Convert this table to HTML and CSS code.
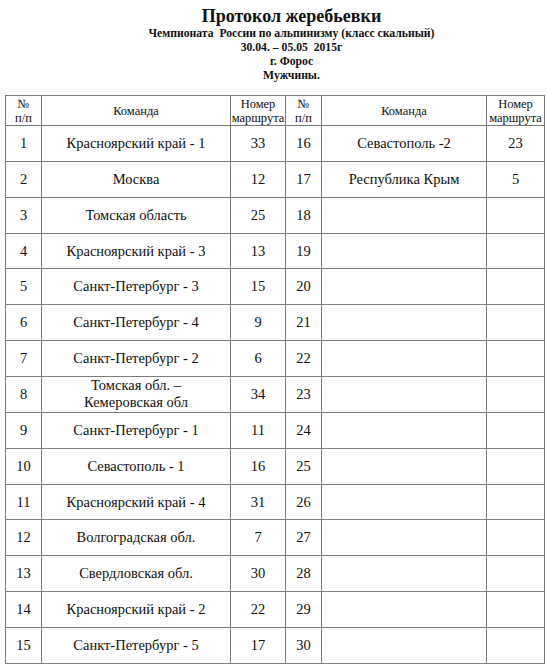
FILE: index.html
```html
<!DOCTYPE html>
<html lang="ru">
<head>
<meta charset="utf-8">
<link rel="stylesheet" href="styles.css">
</head>
<body>
<div class="head">
  <div class="title">Протокол жеребьевки</div>
  <div class="sub">Чемпионата&nbsp; России по альпинизму (класс скальный)</div>
  <div class="sub">30.04. – 05.05&nbsp; 2015г</div>
  <div class="sub">г. Форос</div>
  <div class="sub">Мужчины.</div>
</div>
<table class="grid">
  <colgroup>
    <col class="c1"><col class="c2"><col class="c3"><col class="c4"><col class="c5"><col class="c6">
  </colgroup>
  <thead>
    <tr><th>№<br>п/п</th><th>Команда</th><th>Номер<br>маршрута</th><th>№<br>п/п</th><th>Команда</th><th>Номер<br>маршрута</th></tr>
  </thead>
  <tbody>
    <tr><td>1</td><td>Красноярский край - 1</td><td>33</td><td>16</td><td>Севастополь -2</td><td>23</td></tr>
    <tr><td>2</td><td>Москва</td><td>12</td><td>17</td><td>Республика Крым</td><td>5</td></tr>
    <tr><td>3</td><td>Томская область</td><td>25</td><td>18</td><td></td><td></td></tr>
    <tr><td>4</td><td>Красноярский край - 3</td><td>13</td><td>19</td><td></td><td></td></tr>
    <tr><td>5</td><td>Санкт-Петербург - 3</td><td>15</td><td>20</td><td></td><td></td></tr>
    <tr><td>6</td><td>Санкт-Петербург - 4</td><td>9</td><td>21</td><td></td><td></td></tr>
    <tr><td>7</td><td>Санкт-Петербург - 2</td><td>6</td><td>22</td><td></td><td></td></tr>
    <tr><td>8</td><td class="two">Томская обл. –<br>Кемеровская обл</td><td>34</td><td>23</td><td></td><td></td></tr>
    <tr><td>9</td><td>Санкт-Петербург - 1</td><td>11</td><td>24</td><td></td><td></td></tr>
    <tr><td>10</td><td>Севастополь - 1</td><td>16</td><td>25</td><td></td><td></td></tr>
    <tr><td>11</td><td>Красноярский край - 4</td><td>31</td><td>26</td><td></td><td></td></tr>
    <tr><td>12</td><td>Волгоградская обл.</td><td>7</td><td>27</td><td></td><td></td></tr>
    <tr><td>13</td><td>Свердловская обл.</td><td>30</td><td>28</td><td></td><td></td></tr>
    <tr><td>14</td><td>Красноярский край - 2</td><td>22</td><td>29</td><td></td><td></td></tr>
    <tr><td>15</td><td>Санкт-Петербург - 5</td><td>17</td><td>30</td><td></td><td></td></tr>
  </tbody>
</table>
</body>
</html>
```
FILE: styles.css
```css
html, body {
  margin: 0;
  padding: 0;
  background: #fff;
}
body {
  font-family: "Liberation Serif", "Times New Roman", serif;
  color: #111;
  padding: 0 3px 0 5px;
}
.head {
  text-align: center;
  padding-left: 34px;
  height: 95px;
  box-sizing: border-box;
  padding-top: 5px;
}
.title {
  font-weight: bold;
  font-size: 18px;
  line-height: 22px;
}
.sub {
  font-weight: bold;
  font-size: 11.7px;
  line-height: 14px;
}
.grid {
  border-collapse: collapse;
  table-layout: fixed;
  width: 539px;
}
.c1 { width: 36px; }
.c2 { width: 189px; }
.c3 { width: 55px; }
.c4 { width: 36px; }
.c5 { width: 165px; }
.c6 { width: 58px; }
.grid th, .grid td {
  border: 1px solid #7a7a7a;
  text-align: center;
  vertical-align: middle;
  padding: 0;
}
.grid th {
  font-weight: normal;
  font-size: 12.5px;
  line-height: 14px;
  height: 29px;
}
.grid td {
  font-size: 14.5px;
  line-height: 17px;
  height: 34.87px;
}
```
